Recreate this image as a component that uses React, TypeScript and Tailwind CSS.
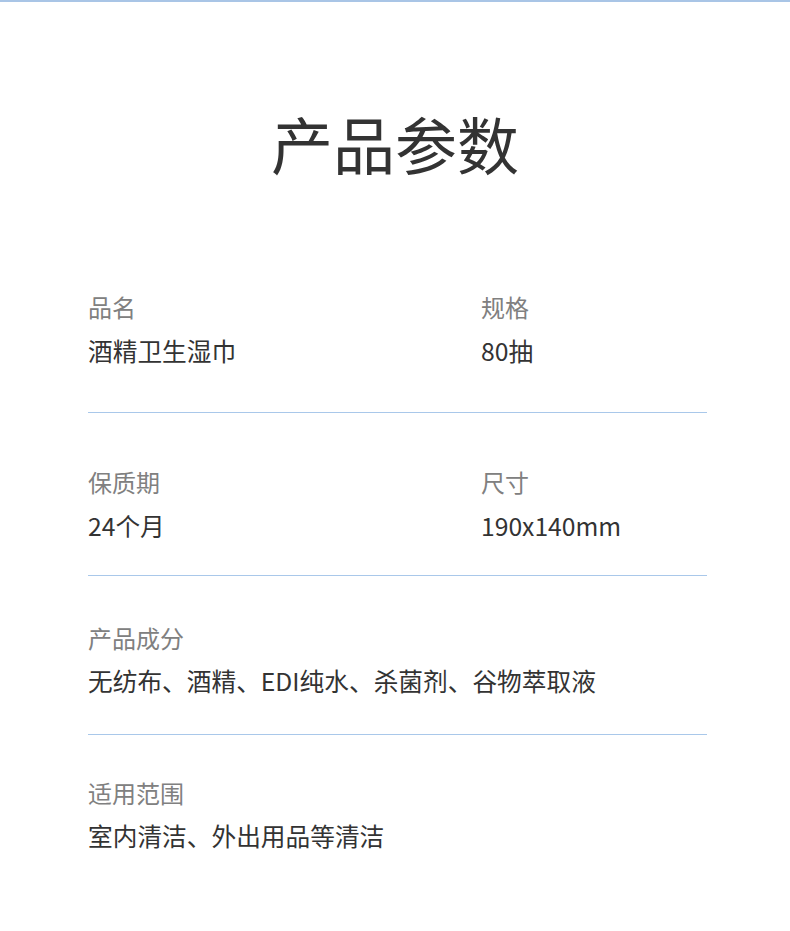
const font = { fontFamily: '"Noto Sans CJK SC", "Noto Sans", sans-serif' };

type Row = {
  items: { label: string; value: string }[];
  top: string;
  gap: string;
  bottom: string;
  line: boolean;
};

const rows: Row[] = [
  { items: [{ label: "品名", value: "酒精卫生湿巾" }, { label: "规格", value: "80抽" }], top: "pt-[121px]", gap: "mt-[19px]", bottom: "pb-[49px]", line: true },
  { items: [{ label: "保质期", value: "24个月" }, { label: "尺寸", value: "190x140mm" }], top: "pt-[57px]", gap: "mt-[19px]", bottom: "pb-[37px]", line: true },
  { items: [{ label: "产品成分", value: "无纺布、酒精、EDI纯水、杀菌剂、谷物萃取液" }], top: "pt-[50px]", gap: "mt-[18px]", bottom: "pb-[41px]", line: true },
  { items: [{ label: "适用范围", value: "室内清洁、外出用品等清洁" }], top: "pt-[46px]", gap: "mt-[18px]", bottom: "pb-0", line: false },
];

export default function App() {
  return (
    <div className="w-[790px] h-[931px] bg-white" style={font}>
      <div className="h-[2px] bg-[#a9c5e6]" />
      <h1 className="pt-[110px] text-center text-[62px] leading-none font-normal text-[#333333]">产品参数</h1>

      <div className="ml-[88px] w-[619px]">
        {rows.map((row, i) => (
          <div key={i}>
            <div className={`${row.top} ${row.bottom} grid grid-cols-[393px_1fr]`}>
              {row.items.map((item) => (
                <div key={item.label} className={row.items.length === 1 ? "col-span-2" : ""}>
                  <div className="text-[24px] leading-[24px] text-[#808080]">{item.label}</div>
                  <div className={`${row.gap} text-[24.7px] leading-[25px] text-[#333333]`}>{item.value}</div>
                </div>
              ))}
            </div>
            {row.line && <div className="h-px bg-[#a9c8ea]" />}
          </div>
        ))}
      </div>
    </div>
  );
}
